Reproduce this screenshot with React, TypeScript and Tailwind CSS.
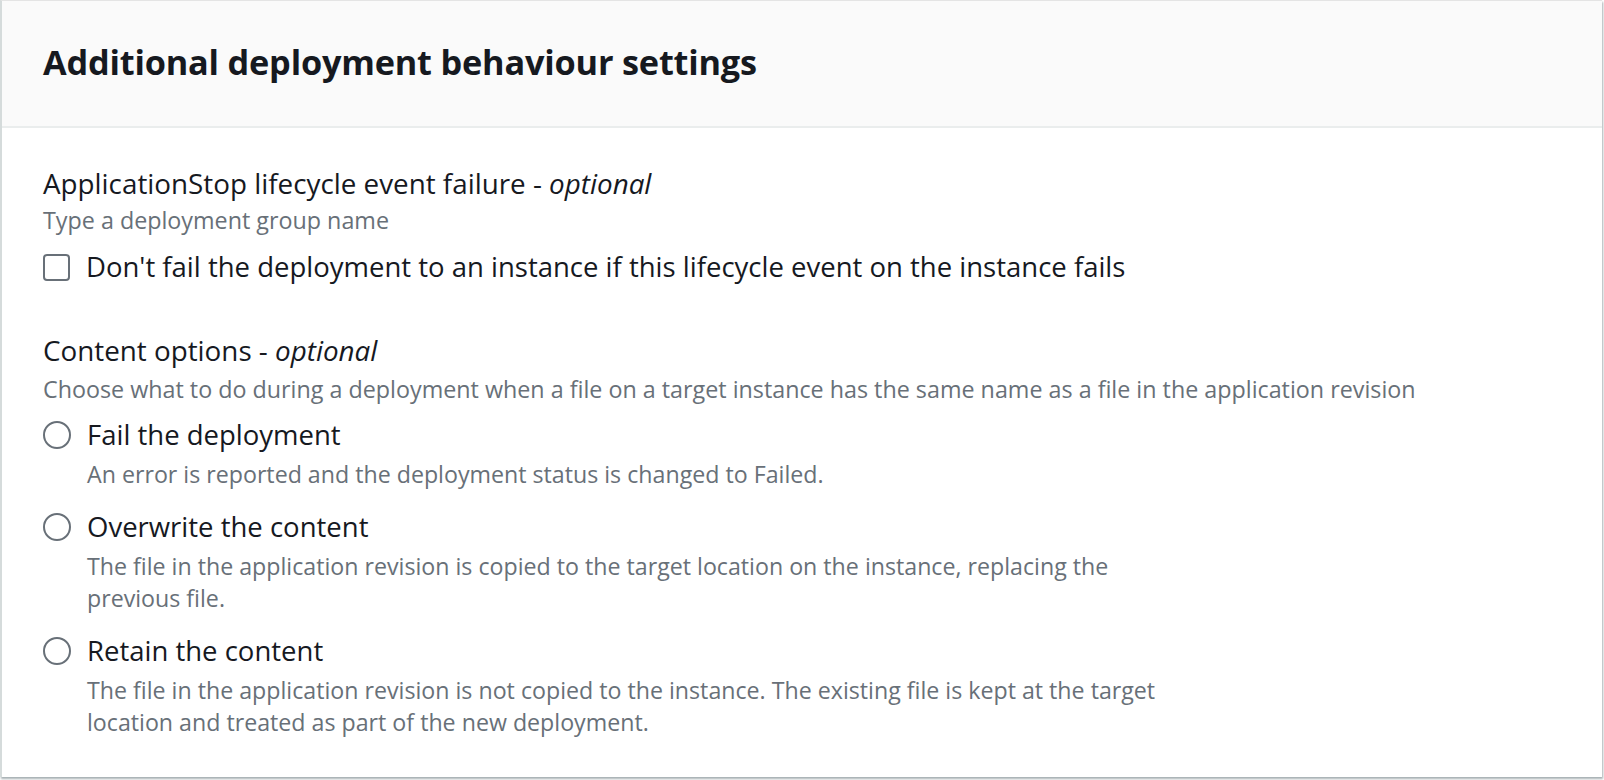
import React, { useState } from 'react';

const FONT = { fontFamily: '"Open Sans", "Noto Sans", Arial, sans-serif' };

type Option = { value: string; label: string; description: string[] };

const CONTENT_OPTIONS: Option[] = [
  {
    value: 'fail',
    label: 'Fail the deployment',
    description: ['An error is reported and the deployment status is changed to Failed.'],
  },
  {
    value: 'overwrite',
    label: 'Overwrite the content',
    description: [
      'The file in the application revision is copied to the target location on the instance, replacing the',
      'previous file.',
    ],
  },
  {
    value: 'retain',
    label: 'Retain the content',
    description: [
      'The file in the application revision is not copied to the instance. The existing file is kept at the target',
      'location and treated as part of the new deployment.',
    ],
  },
];

const Checkbox: React.FC<{ checked: boolean; onChange: () => void }> = ({ checked, onChange }) => (
  <button
    type="button"
    onClick={onChange}
    className="w-[27px] h-[27px] shrink-0 rounded-[4px] border-2 border-[#687078] bg-white flex items-center justify-center"
  >
    {checked && (
      <svg width="16" height="16" viewBox="0 0 16 16" fill="none">
        <path d="M3 8.5l3.5 3.5L13 4.5" stroke="#0073bb" strokeWidth="2.5" />
      </svg>
    )}
  </button>
);

const Radio: React.FC<{ checked: boolean }> = ({ checked }) => (
  <span className="w-[28px] h-[28px] shrink-0 rounded-full border-2 border-[#687078] bg-white flex items-center justify-center">
    {checked && <span className="w-[12px] h-[12px] rounded-full bg-[#0073bb]" />}
  </span>
);

export default function App() {
  const [dontFail, setDontFail] = useState(false);
  const [content, setContent] = useState('');

  return (
    <div style={FONT} className="w-[1604px] h-[780px] bg-white text-[#16191f]">
      <div className="w-[1602px] h-[777px] border-l-2 border-t border-l-[#d5dbdb] border-t-[#e4e4e4] shadow-[1px_2px_2px_rgba(0,28,36,0.35)] bg-white">
        <div className="h-[127px] bg-[#fafafa] border-b-2 border-[#eaeded] px-[41px] flex items-center">
          <h2 className="text-[34.3px] font-bold leading-[40px] tracking-[-0.2px] -mt-[3px]">
            Additional deployment behaviour settings
          </h2>
        </div>

        <div className="px-[41px] pt-[38px]">
          <div className="text-[27.8px] leading-[34px]">
            ApplicationStop lifecycle event failure - <i>optional</i>
          </div>
          <div className="mt-[4px] text-[23.3px] leading-[32px] text-[#687078]">
            Type a deployment group name
          </div>
          <label className="mt-[14px] h-[34px] flex items-center gap-[16px] cursor-pointer">
            <Checkbox checked={dontFail} onChange={() => setDontFail(!dontFail)} />
            <span className="text-[27.5px] leading-[34px]">
              Don't fail the deployment to an instance if this lifecycle event on the instance fails
            </span>
          </label>

          <div className="mt-[49px] text-[27.8px] leading-[34px]">
            Content options - <i>optional</i>
          </div>
          <div className="mt-[6px] text-[23.3px] leading-[32px] text-[#687078]">
            Choose what to do during a deployment when a file on a target instance has the same name as a file in the
            application revision
          </div>

          <div className="mt-[13px] flex flex-col gap-[20px]">
            {CONTENT_OPTIONS.map((opt) => (
              <div key={opt.value} onClick={() => setContent(opt.value)} className="cursor-pointer">
                <div className="h-[34px] flex items-center gap-[16px]">
                  <Radio checked={content === opt.value} />
                  <span className="text-[27.5px] leading-[34px]">{opt.label}</span>
                </div>
                <div className="mt-[6px] pl-[44px] text-[23.2px] leading-[32px] text-[#687078]">
                  {opt.description.map((line) => (
                    <div key={line}>{line}</div>
                  ))}
                </div>
              </div>
            ))}
          </div>
        </div>
      </div>
    </div>
  );
}
